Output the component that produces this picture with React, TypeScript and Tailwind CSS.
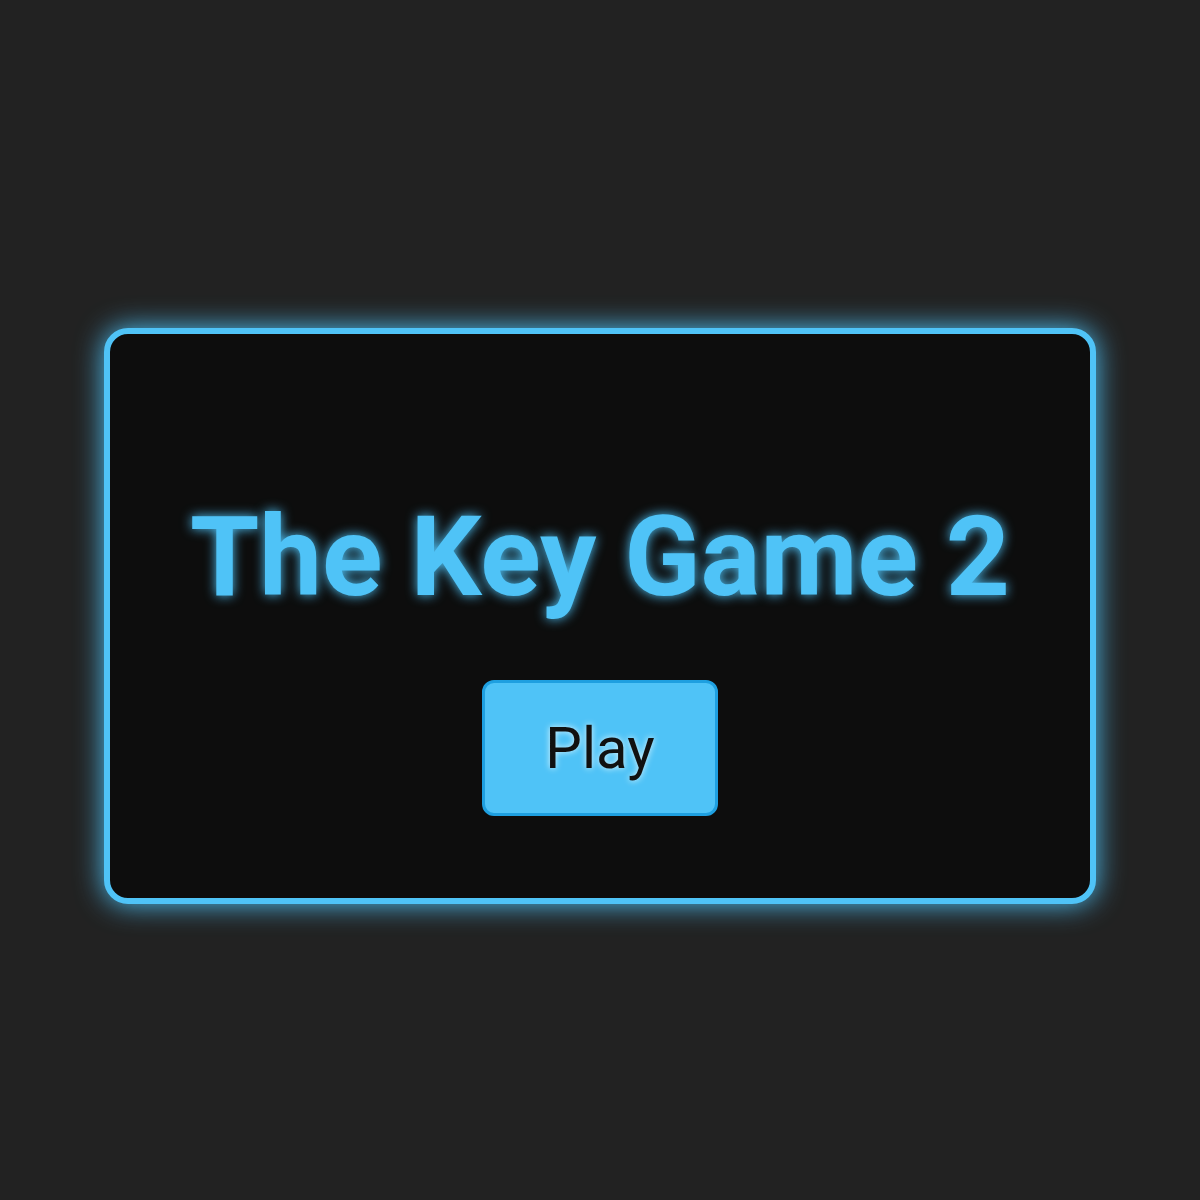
import React from "react";

const App = () => {
  return (
    <div
      className="w-full h-[1200px] bg-[#222222] flex justify-center pt-[328px]"
      style={{ fontFamily: "Roboto, 'Liberation Sans', sans-serif" }}
    >
      <div className="w-[992px] h-[576px] bg-[#0d0d0d] border-[6px] border-[#4fc3f7] rounded-[24px] shadow-[0_0_28px_#4fc3f7] flex flex-col items-center pt-[157px]">
        <h1 className="text-[112px] leading-[131px] font-bold text-[#4fc3f7] [text-shadow:0_0_12px_#4fc3f7]">
          The Key Game 2
        </h1>
        <button className="mt-[58px] w-[236px] h-[136px] bg-[#4fc3f7] border-[3px] border-[#1e9fe0] rounded-[12px] text-[58px] text-[#111111] [text-shadow:0_0_6px_#e0f7ff]">
          Play
        </button>
      </div>
    </div>
  );
};

export default App;
